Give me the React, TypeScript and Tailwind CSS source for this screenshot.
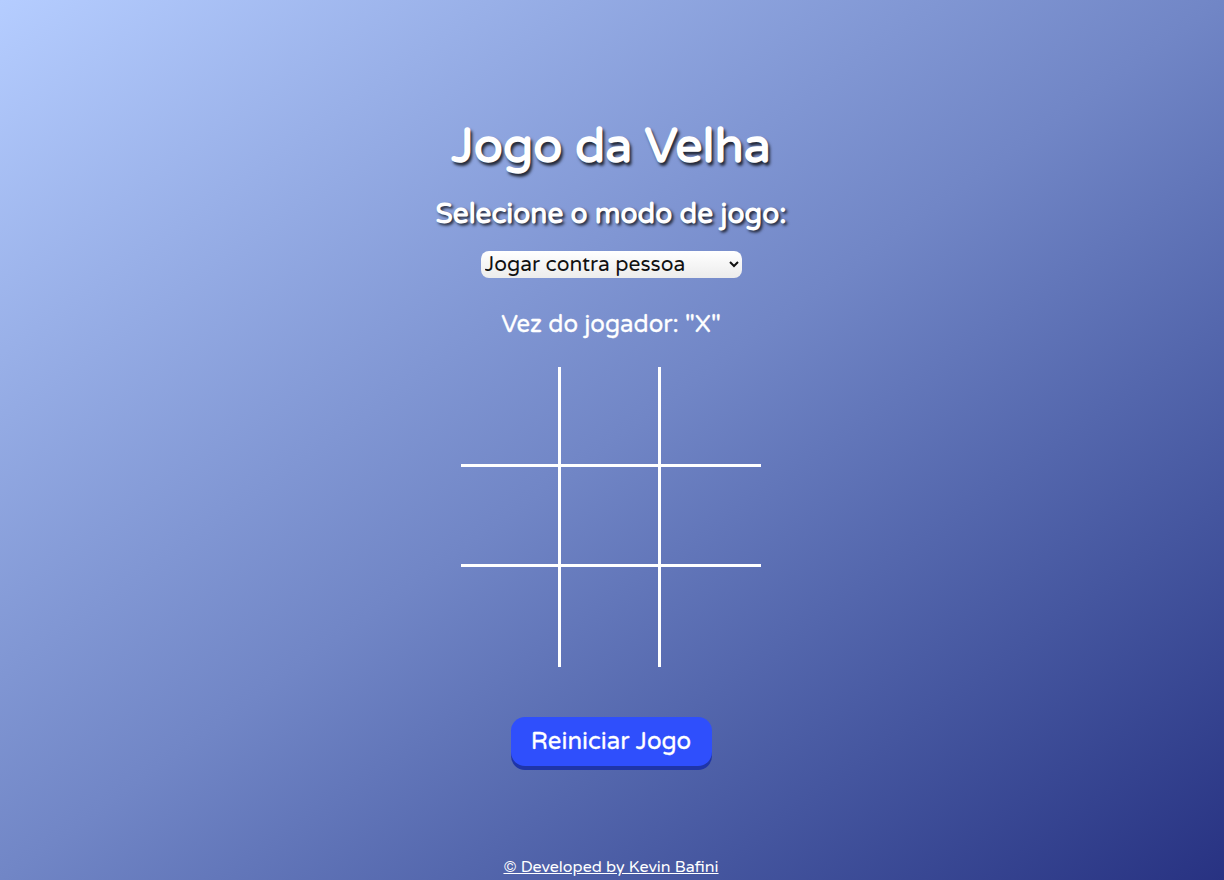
import { useState } from "react";

const font = { fontFamily: '"Varela Round", Lato, "Open Sans", sans-serif' };

export default function App() {
  const [board, setBoard] = useState<string[]>(Array(9).fill(""));
  const [turn, setTurn] = useState("X");
  const [mode, setMode] = useState("pessoa");

  const play = (i: number) => {
    if (board[i]) return;
    const next = [...board];
    next[i] = turn;
    setBoard(next);
    setTurn(turn === "X" ? "O" : "X");
  };

  const reset = () => {
    setBoard(Array(9).fill(""));
    setTurn("X");
  };

  return (
    <div
      className="min-h-[880px] w-full pr-[2px] bg-gradient-to-br from-[#b5cdff] via-[#7186c6] to-[#283282] text-white flex flex-col items-center"
      style={font}
    >
      <main className="flex flex-col items-center pt-[117px]">
        <h1 className="text-[48px] leading-[60px] font-bold [text-shadow:2px_3px_3px_rgba(0,0,0,0.75)]">
          Jogo da Velha
        </h1>
        <h2 className="mt-[19px] text-[28px] leading-[36px] font-bold [text-shadow:2px_2px_3px_rgba(0,0,0,0.75)]">
          Selecione o modo de jogo:
        </h2>
        <select
          value={mode}
          onChange={(e) => setMode(e.target.value)}
          className="mt-[19px] w-[261px] h-[27px] rounded-lg bg-gradient-to-b from-white to-[#ececec] text-[#111] text-[21px] leading-none outline-none"
          style={font}
        >
          <option value="pessoa">Jogar contra pessoa</option>
          <option value="bot">Jogar contra bot</option>
        </select>
        <p className="mt-[32px] text-[24px] leading-[30px] [-webkit-text-stroke:0.3px_white]">
          Vez do jogador: "{turn}"
        </p>
        <div className="mt-[27px] grid grid-cols-[repeat(3,100px)] grid-rows-[repeat(3,100px)]">
          {board.map((v, i) => (
            <button
              key={i}
              onClick={() => play(i)}
              className={
                "flex items-center justify-center text-[64px] font-bold border-white " +
                (i % 3 !== 2 ? "border-r-[3px] " : "") +
                (i < 6 ? "border-b-[3px]" : "")
              }
              style={font}
            >
              {v}
            </button>
          ))}
        </div>
        <button
          onClick={reset}
          className="mt-[50px] w-[201px] h-[49px] rounded-[14px] bg-[#2f4ffc] text-[24px] shadow-[0_4px_0_#1f35a8] [-webkit-text-stroke:0.3px_white]"
          style={font}
        >
          Reiniciar Jogo
        </button>
      </main>
      <footer className="mt-auto pb-[1px]">
        <a href="#" className="text-[16px] underline">
          © Developed by Kevin Bafini
        </a>
      </footer>
    </div>
  );
}
